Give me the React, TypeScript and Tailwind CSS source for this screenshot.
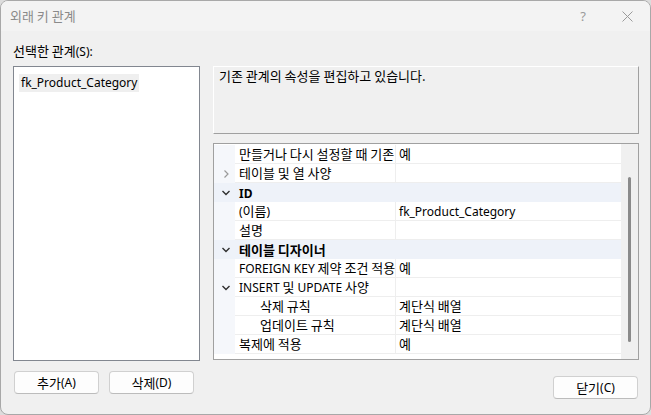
import React from "react";

const FONT = "font-['Noto_Sans_CJK_KR','Noto_Sans',sans-serif]";
const LAT = "font-['Noto_Sans','Noto_Sans_CJK_KR',sans-serif] text-[12px]";

function ChevronRight() {
  return (
    <svg width="8" height="10" viewBox="0 0 8 10" className="block">
      <path d="M2.5 1.5 L6 5 L2.5 8.5" fill="none" stroke="#9a9a9a" strokeWidth="1.2" />
    </svg>
  );
}

function ChevronDown() {
  return (
    <svg width="10" height="8" viewBox="0 0 10 8" className="block">
      <path d="M1.5 2 L5 5.5 L8.5 2" fill="none" stroke="#303030" strokeWidth="1.4" />
    </svg>
  );
}

type Row =
  | { kind: "cat"; label: React.ReactNode }
  | { kind: "prop"; label: React.ReactNode; value?: React.ReactNode; indent?: boolean; glyph?: "right" | "down" };

const L = ({ children }: { children: React.ReactNode }) => <span className={LAT}>{children}</span>;

const rows: Row[] = [
  { kind: "prop", label: "만들거나 다시 설정할 때 기존", value: "예" },
  { kind: "prop", label: "테이블 및 열 사양", glyph: "right" },
  { kind: "cat", label: <L>ID</L> },
  { kind: "prop", label: <><L>(</L>이름<L>)</L></>, value: <L>fk_Product_Category</L> },
  { kind: "prop", label: "설명" },
  { kind: "cat", label: "테이블 디자이너" },
  { kind: "prop", label: <><L>FOREIGN KEY</L> 제약 조건 적용</>, value: "예" },
  { kind: "prop", label: <><L>INSERT</L> 및 <L>UPDATE</L> 사양</>, glyph: "down" },
  { kind: "prop", label: "삭제 규칙", value: "계단식 배열", indent: true },
  { kind: "prop", label: "업데이트 규칙", value: "계단식 배열", indent: true },
  { kind: "prop", label: "복제에 적용", value: "예" },
];

function GridRow({ row }: { row: Row }) {
  if (row.kind === "cat") {
    return (
      <div className="flex h-[19px] bg-[#eef2f9] items-center">
        <div className="w-[21px] h-full flex items-center justify-center pl-[3px]">
          <ChevronDown />
        </div>
        <div className="pl-[4px] font-bold text-[13px] leading-[19px] text-black">{row.label}</div>
      </div>
    );
  }
  return (
    <div className="flex h-[19px]">
      <div className="w-[21px] h-full bg-[#f5f7fb] flex items-center justify-center pl-[3px]">
        {row.glyph === "right" && <ChevronRight />}
        {row.glyph === "down" && <ChevronDown />}
      </div>
      <div
        className={`w-[161px] h-full border-b border-r border-[#eeeeee] overflow-hidden whitespace-nowrap text-[13px] leading-[18px] text-black ${
          row.indent ? "pl-[25px]" : "pl-[4px]"
        }`}
      >
        {row.label}
      </div>
      <div className="flex-1 h-full border-b border-[#eeeeee] overflow-hidden whitespace-nowrap pl-[3px] text-[13px] leading-[18px] text-black">
        {row.value ?? ""}
      </div>
    </div>
  );
}

function Button({ children, className = "" }: { children: React.ReactNode; className?: string }) {
  return (
    <div
      className={`w-[85px] h-[23px] rounded-[4px] border border-[#d0d0d0] border-b-[#bcbcbc] bg-[#fdfdfd] flex items-center justify-center text-[13px] leading-[16px] text-black ${className}`}
    >
      {children}
    </div>
  );
}

export default function App() {
  return (
    <div className={`w-[651px] h-[415px] bg-[#dcdcdc] ${FONT}`}>
      <div className="w-full h-full rounded-[8px] border border-[#a8a8a8] bg-[#f0f0f0] overflow-hidden flex flex-col">
        {/* Title bar */}
        <div className="h-[30px] bg-[#f3f3f3] flex items-center pl-[9px] pr-[17px]">
          <div className="text-[13px] text-[#8a8a8a] leading-[16px] flex-1">외래 키 관계</div>
          <div className="text-[13px] text-[#9a9a9a] mr-[36px] leading-[16px] font-['Noto_Sans',sans-serif]">?</div>
          <svg width="11" height="11" viewBox="0 0 11 11" className="block">
            <path d="M0.5 0.5 L10.5 10.5 M10.5 0.5 L0.5 10.5" stroke="#9a9a9a" strokeWidth="1" />
          </svg>
        </div>

        {/* Body */}
        <div className="flex h-[330px] pl-[12px]">
          {/* Left column */}
          <div className="w-[187px] flex flex-col pt-[12px]">
            <div className="text-[13px] leading-[16px] text-black">
              선택한 관계<L>(S):</L>
            </div>
            <div className="mt-[6px] h-[296px] border border-[#828790] bg-white pl-[5px] pt-[1px]">
              <span className={`inline-block bg-[#efefef] px-[2px] leading-[18px] text-black ${LAT}`}>
                fk_Product_Category
              </span>
            </div>
          </div>

          {/* Right column */}
          <div className="ml-[13px] w-[426px] flex flex-col pt-[35px]">
            <div className="h-[68px] border border-white border-r-[#a0a0a0] border-b-[#a0a0a0] bg-[#f0f0f0] pl-[5px] pt-[1px]">
              <div className="text-[13px] leading-[16px] text-black">기존 관계의 속성을 편집하고 있습니다.</div>
            </div>
            <div className="mt-[9px] h-[217px] border border-[#a0a0a0] bg-white flex">
              <div className="flex-1 flex flex-col pt-[1px]">
                {rows.map((r, i) => (
                  <GridRow key={i} row={r} />
                ))}
              </div>
              <div className="w-[17px] bg-[#f0f0f0] pl-[7px] pt-[33px]">
                <div className="w-[3px] h-[165px] rounded-full bg-[#8a8a8a]" />
              </div>
            </div>
          </div>
        </div>

        {/* Footer */}
        <div className="flex-1 flex pl-[13px] pr-[12px] pt-[10px]">
          <Button>
            추가<L>(A)</L>
          </Button>
          <Button className="ml-[10px]">
            삭제<L>(D)</L>
          </Button>
          <div className="flex-1" />
          <Button className="mt-[5px]">
            닫기<L>(C)</L>
          </Button>
        </div>
      </div>
    </div>
  );
}
